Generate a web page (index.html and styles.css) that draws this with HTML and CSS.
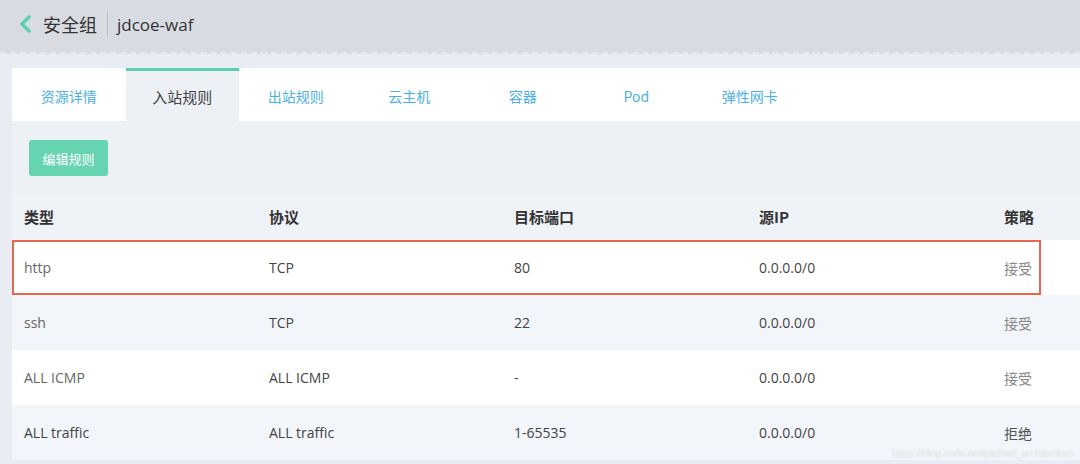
FILE: index.html
```html
<!DOCTYPE html>
<html lang="zh">
<head>
<meta charset="utf-8">
<title>安全组 jdcoe-waf</title>
<link rel="stylesheet" href="styles.css">
</head>
<body>
<header class="topbar">
  <svg class="back" width="14" height="18" viewBox="0 0 14 18"><polyline points="11,2 4,9 11,16" fill="none" stroke="#5ccfb0" stroke-width="3.6" stroke-linecap="round" stroke-linejoin="round"/></svg>
  <span class="title">安全组</span>
  <span class="sep"></span>
  <span class="name">jdcoe-waf</span>
</header>
<main class="main">
  <section class="panel">
    <nav class="tabs">
      <span class="tab">资源详情</span>
      <span class="tab active">入站规则</span>
      <span class="tab">出站规则</span>
      <span class="tab">云主机</span>
      <span class="tab">容器</span>
      <span class="tab">Pod</span>
      <span class="tab">弹性网卡</span>
    </nav>
    <div class="toolbar">
      <button class="btn">编辑规则</button>
    </div>
    <div class="table">
      <div class="row head">
        <span>类型</span><span>协议</span><span>目标端口</span><span>源IP</span><span>策略</span>
      </div>
      <div class="row odd marked">
        <span class="type">http</span><span>TCP</span><span>80</span><span>0.0.0.0/0</span><span class="accept">接受</span>
      </div>
      <div class="row even">
        <span class="type">ssh</span><span>TCP</span><span>22</span><span>0.0.0.0/0</span><span class="accept">接受</span>
      </div>
      <div class="row odd">
        <span class="type">ALL ICMP</span><span>ALL ICMP</span><span>-</span><span>0.0.0.0/0</span><span class="accept">接受</span>
      </div>
      <div class="row even">
        <span>ALL traffic</span><span>ALL traffic</span><span>1-65535</span><span>0.0.0.0/0</span><span class="deny">拒绝</span>
      </div>
    </div>
  </section>
</main>
<div class="watermark">https://blog.csdn.net/jdcloud_architecture</div>
</body>
</html>
```
FILE: styles.css
```css
* { box-sizing: border-box; }
html, body { margin: 0; padding: 0; }
body {
  width: 1080px;
  height: 464px;
  overflow: hidden;
  background: #e9edf3;
  font-family: "Open Sans", "Noto Sans CJK SC", sans-serif;
  color: #444;
  position: relative;
}
.topbar {
  height: 54px;
  background: #d8dce2;
  border-bottom: 2px dashed #e6e9ee;
  display: flex;
  align-items: center;
  padding-left: 18px;
  padding-bottom: 4px;
}
.back { margin-right: 11px; }
.title {
  font-family: "Noto Sans CJK SC", sans-serif;
  font-size: 18px;
  color: #333;
}
.sep {
  width: 1px;
  height: 24px;
  background: #b9bec6;
  margin: 0 9px 0 10px;
}
.name {
  font-size: 17px;
  color: #333;
}
.main {
  padding: 14px 0 0 12px;
}
.panel {
  background: #edf0f5;
}
.tabs {
  display: flex;
  height: 53px;
  background: #fff;
}
.tab {
  width: 113.5px;
  display: flex;
  align-items: center;
  justify-content: center;
  font-family: "Noto Sans CJK SC", sans-serif;
  font-size: 14px;
  color: #4cb0e6;
  padding-top: 3px;
}
.tab.active {
  background: #edf0f5;
  color: #444;
  border-top: 3px solid #5ccfb0;
  padding-top: 0;
  font-size: 15px;
}
.toolbar {
  height: 72px;
  padding: 19px 17px;
}
.btn {
  width: 79px;
  height: 36px;
  border: none;
  border-radius: 3px;
  background: #66d3b1;
  color: #fff;
  font-family: "Noto Sans CJK SC", sans-serif;
  font-size: 13px;
  padding: 0;
}
.table { background: #f2f5f9; }
.row {
  display: grid;
  grid-template-columns: 245px 245px 245px 245px 1fr;
  height: 55px;
  align-items: center;
  font-size: 14px;
  color: #444;
}
.row span { padding-left: 12px; }
.row.head {
  height: 47px;
  background: #eff2f7;
  font-family: "Noto Sans CJK SC", sans-serif;
  font-weight: bold;
  font-size: 15px;
  color: #333;
}
.row.odd { background: #fff; }
.row.even { background: #f2f5f9; }
.type { color: #666; }
.accept { color: #888; font-family: "Noto Sans CJK SC", sans-serif; }
.deny { color: #555; font-family: "Noto Sans CJK SC", sans-serif; }
.marked { position: relative; }
.marked::after {
  content: "";
  position: absolute;
  left: 0;
  top: 0;
  right: 39px;
  height: 51px;
  border: 2px solid #e9654f;
  pointer-events: none;
}
.watermark {
  position: absolute;
  right: 6px;
  bottom: 5px;
  font-size: 10px;
  color: rgba(255,255,255,0.75);
  text-shadow: 0 0 1px rgba(150,150,150,0.5);
  font-family: "Liberation Sans", sans-serif;
}
```
